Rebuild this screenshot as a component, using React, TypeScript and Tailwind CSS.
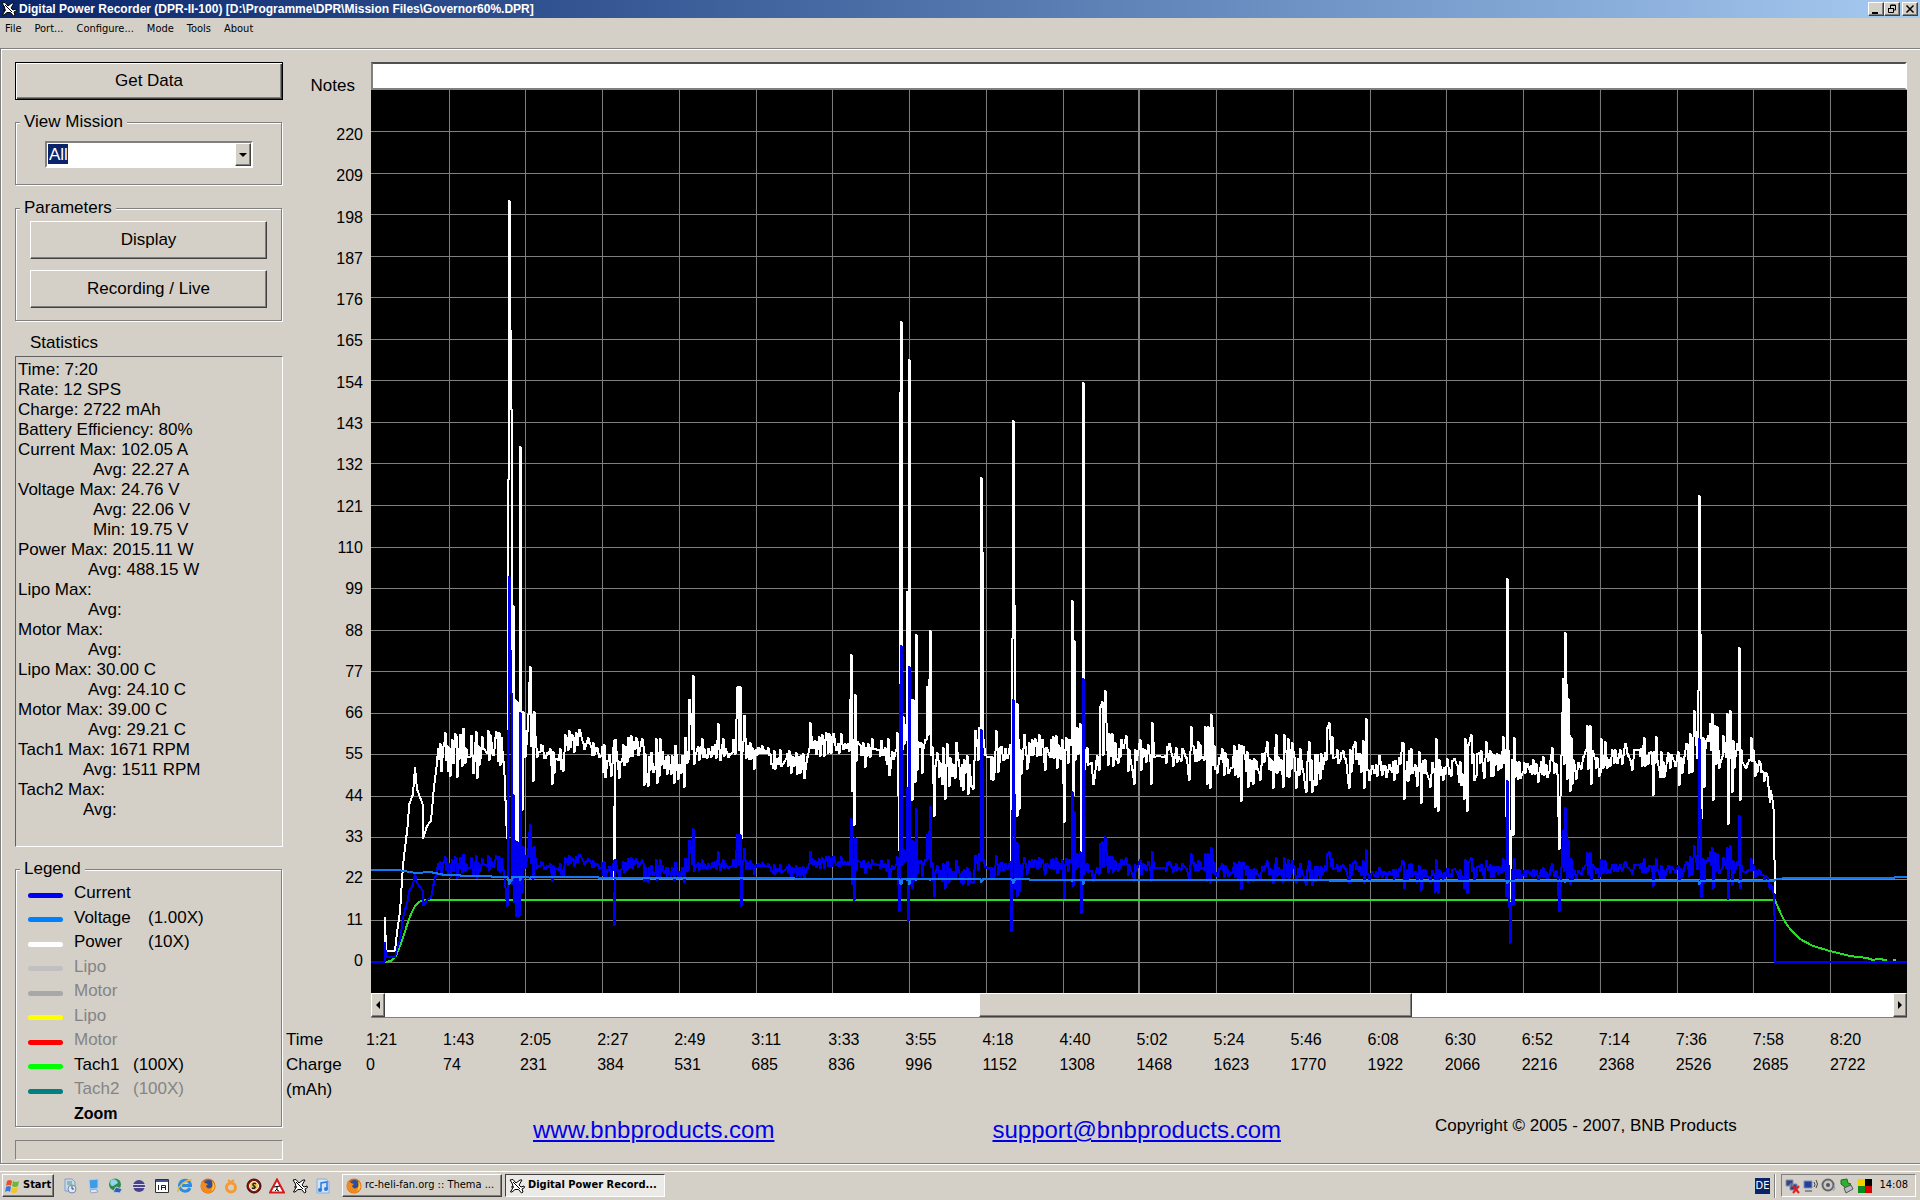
import { ReactNode, useState } from 'react';
import { clsx } from 'clsx';

type Pt = [number, number];

const UI = 'font-["Tahoma","DejaVu_Sans_Condensed","Noto_Sans",sans-serif]';
const RAISED = 'border border-t-white border-l-white border-r-[#404040] border-b-[#404040] bg-[#d4d0c8] shadow-[inset_-1px_-1px_0_#808080]';

const MENUS = ['File', 'Port...', 'Configure...', 'Mode', 'Tools', 'About'];

const STATS: { text: string; indent?: string }[] = [
  { text: 'Time: 7:20' },
  { text: 'Rate: 12 SPS' },
  { text: 'Charge: 2722 mAh' },
  { text: 'Battery Efficiency: 80%' },
  { text: 'Current Max: 102.05 A' },
  { text: 'Avg: 22.27 A', indent: 'pl-[75px]' },
  { text: 'Voltage Max: 24.76 V' },
  { text: 'Avg: 22.06 V', indent: 'pl-[75px]' },
  { text: 'Min: 19.75 V', indent: 'pl-[75px]' },
  { text: 'Power Max: 2015.11 W' },
  { text: 'Avg: 488.15 W', indent: 'pl-[70px]' },
  { text: 'Lipo Max:' },
  { text: 'Avg:', indent: 'pl-[70px]' },
  { text: 'Motor Max:' },
  { text: 'Avg:', indent: 'pl-[70px]' },
  { text: 'Lipo Max: 30.00 C' },
  { text: 'Avg: 24.10 C', indent: 'pl-[70px]' },
  { text: 'Motor Max: 39.00 C' },
  { text: 'Avg: 29.21 C', indent: 'pl-[70px]' },
  { text: 'Tach1 Max: 1671 RPM' },
  { text: 'Avg: 1511 RPM', indent: 'pl-[65px]' },
  { text: 'Tach2 Max:' },
  { text: 'Avg:', indent: 'pl-[65px]' },
];

const LEGEND = [
  { name: 'Current', color: 'bg-[#0000f0]', on: true },
  { name: 'Voltage', color: 'bg-[#0080ff]', on: true, scale: '(1.00X)', col: 'w-[74px]' },
  { name: 'Power', color: 'bg-white', on: true, scale: '(10X)', col: 'w-[74px]' },
  { name: 'Lipo', color: 'bg-[#c0c0c0]', on: false },
  { name: 'Motor', color: 'bg-[#a8a8a8]', on: false },
  { name: 'Lipo', color: 'bg-[#ffff00]', on: false },
  { name: 'Motor', color: 'bg-[#ff0000]', on: false },
  { name: 'Tach1', color: 'bg-[#00ff00]', on: true, scale: '(100X)', col: 'w-[59px]' },
  { name: 'Tach2', color: 'bg-[#008080]', on: false, scale: '(100X)', col: 'w-[59px]' },
];

const TICKS = Array.from({ length: 21 }, (_, i) => 220 - i * 11);
const TIMES = ['1:21', '1:43', '2:05', '2:27', '2:49', '3:11', '3:33', '3:55', '4:18', '4:40', '5:02', '5:24', '5:46', '6:08', '6:30', '6:52', '7:14', '7:36', '7:58', '8:20'];
const CHARGES = [0, 74, 231, 384, 531, 685, 836, 996, 1152, 1308, 1468, 1623, 1770, 1922, 2066, 2216, 2368, 2526, 2685, 2722];

// plot space: x 371..1907, zero line at y=962, 3.777 units per scale step
const ZERO = 962;
const UNIT = 3.777;

const START: Pt[] = [[385, 962], [385, 917], [386, 951], [395, 951], [397, 933], [400, 912], [403, 865], [408, 823], [409, 805], [413, 794], [415, 767], [417, 789], [423, 805], [423, 839], [427, 826], [431, 821], [434, 787], [437, 763]];

// [from x, centre, spread]
const BANDS: [number, number, number][] = [
  [438, 753, 24], [486, 748, 18], [500, 756, 20], [523, 742, 14], [535, 750, 14], [548, 762, 16], [564, 741, 12], [590, 750, 9], [602, 758, 20],
  [622, 752, 18], [644, 761, 26], [686, 751, 12], [745, 751, 8], [770, 762, 12], [800, 760, 20], [811, 746, 13], [856, 753, 15], [888, 755, 22],
  [903, 740, 24], [918, 745, 10], [935, 769, 24], [974, 750, 20], [986, 760, 18], [1000, 751, 14], [1020, 752, 21], [1064, 748, 24],
  [1085, 760, 22], [1109, 753, 18], [1145, 754, 13], [1204, 757, 22], [1213, 762, 16], [1243, 765, 23], [1325, 755, 10], [1350, 757, 15],
  [1368, 768, 14], [1400, 768, 20], [1440, 772, 13], [1464, 758, 22], [1514, 769, 20], [1573, 766, 16], [1593, 762, 14], [1601, 753, 17],
  [1646, 760, 22], [1657, 764, 14], [1682, 748, 24], [1705, 745, 24], [1715, 752, 28], [1733, 752, 20], [1742, 758, 12], [1755, 766, 10],
  [1762, 775, 9],
];

const PEAKS: Pt[] = [
  [507, 838], [508, 480], [509, 201], [510, 330], [511, 409], [512, 790], [513, 606], [514, 830], [515, 700], [516, 860], [517, 702], [518, 858], [519, 861], [520, 447], [521, 712], [522, 810], [523, 712],
  [530, 667], [532, 715], [533, 781], [534, 712], [552, 784], [614, 741], [614, 879], [615, 740], [619, 778],
  [648, 786], [674, 783], [684, 787], [688, 760], [689, 700], [691, 724], [693, 676], [694, 764], [718, 724], [737, 688], [738, 687], [739, 750], [740, 687], [741, 839], [742, 752], [744, 716],
  [754, 769], [804, 778], [810, 723], [851, 655], [852, 791], [854, 825], [855, 695],
  [899, 850], [900, 393], [901, 322], [902, 750], [903, 717], [905, 725], [906, 740], [907, 592], [908, 870], [909, 360], [910, 790], [912, 700], [912, 800], [913, 700], [915, 782], [916, 635], [917, 770],
  [922, 773], [926, 740], [927, 687], [928, 735], [930, 631], [931, 755], [934, 816], [935, 766], [945, 799], [947, 744], [956, 743], [973, 789],
  [977, 746], [979, 728], [980, 740], [981, 478], [982, 552], [983, 740], [985, 755], [993, 780], [996, 731],
  [1010, 745], [1011, 893], [1012, 639], [1013, 421], [1014, 605], [1015, 800], [1017, 704], [1017, 816], [1019, 809], [1020, 750],
  [1064, 822], [1065, 750], [1071, 745], [1072, 601], [1073, 796], [1074, 641], [1075, 760], [1077, 728], [1080, 724], [1081, 854], [1082, 740], [1083, 383], [1084, 770],
  [1093, 784], [1099, 770], [1100, 707], [1102, 702], [1105, 691], [1107, 750], [1108, 765], [1134, 784], [1151, 784], [1152, 723], [1154, 757],
  [1189, 780], [1191, 727], [1204, 760], [1205, 727], [1207, 784], [1208, 727], [1210, 788], [1211, 715], [1212, 727], [1213, 765],
  [1241, 801], [1243, 747], [1276, 735], [1284, 735], [1288, 739], [1296, 788], [1306, 792], [1312, 792], [1326, 760], [1327, 728], [1329, 723], [1332, 737],
  [1349, 788], [1364, 788], [1366, 719], [1367, 770], [1402, 743], [1403, 743], [1404, 799], [1421, 803], [1435, 807], [1436, 739], [1438, 811], [1439, 760],
  [1464, 799], [1465, 739], [1467, 811], [1468, 745], [1506, 816], [1507, 579], [1508, 750], [1510, 920], [1512, 760], [1513, 835], [1514, 738],
  [1559, 849], [1561, 756], [1563, 679], [1565, 633], [1566, 684], [1568, 699], [1569, 735], [1570, 791], [1571, 738], [1572, 784], [1586, 750], [1587, 726], [1590, 726], [1591, 784],
  [1653, 795], [1656, 737], [1679, 785], [1694, 711], [1696, 745], [1698, 691], [1699, 496], [1700, 634], [1701, 819], [1702, 750], [1704, 787],
  [1712, 714], [1713, 800], [1714, 735], [1727, 714], [1728, 824], [1730, 711], [1732, 792], [1738, 750], [1739, 648], [1740, 800], [1741, 750], [1751, 738],
  [1768, 780], [1770, 803], [1771, 790], [1773, 803], [1774, 814], [1775, 894],
];

const TACH: Pt[] = [[385, 962], [391, 961], [396, 956], [402, 941], [407, 925], [411, 914], [415, 906], [419, 902], [424, 900], [1775, 900], [1777, 905], [1782, 916], [1787, 925], [1792, 931], [1800, 939], [1813, 946], [1830, 951], [1850, 956], [1867, 958], [1873, 960], [1878, 959], [1887, 960]];
const VOLT: Pt[] = [[371, 870], [398, 870], [416, 873], [430, 872], [445, 875], [507, 877], [690, 878], [900, 879], [1160, 880], [1500, 881], [1773, 881], [1777, 879], [1787, 878], [1893, 878], [1896, 877], [1907, 877]];

function buildPower(): Pt[] {
  let seed = 20077;
  const rnd = () => { seed = (seed * 16807) % 2147483647; return seed / 2147483647; };
  const out: Pt[] = [...START];
  // every sample is held for one pixel so spikes keep a flat tip
  const hold = (x: number, y: number) => out.push([x, y], [x + 1, y]);
  let p = 0;
  let b = 0;
  let side = 1;
  for (let x = 438; x <= 1767; x++) {
    while (b < BANDS.length - 1 && BANDS[b + 1][0] <= x) b++;
    let hit = false;
    while (p < PEAKS.length && PEAKS[p][0] <= x) { hold(PEAKS[p][0], PEAKS[p][1]); p++; hit = true; }
    const r = rnd();
    const skip = rnd() < 0.3;
    if (hit || skip) continue;
    const next = PEAKS[p];
    const prev = out[out.length - 1];
    // steep flanks are given point by point, no ripple between them
    if (next && next[0] - x < 2 && Math.abs(next[1] - prev[1]) > 60) continue;
    side = rnd() < 0.75 ? -side : side;
    hold(x, Math.round(BANDS[b][1] + side * BANDS[b][2] * (0.15 + r * r * 0.9)));
  }
  PEAKS.slice(p).forEach((v) => out.push(v));
  return out;
}

const toAmps = (y: number) => {
  const power = (ZERO - y) / UNIT;
  return (22.5 - Math.sqrt(506.25 - 1.08 * power)) / 0.054;
};

const voltAt = (x: number) => {
  const i = Math.max(1, VOLT.findIndex((v) => v[0] >= x));
  const [x0, y0] = VOLT[i - 1];
  const [x1, y1] = VOLT[i];
  return y0 + ((y1 - y0) * (x - x0)) / (x1 - x0);
};

const power = buildPower();
const current: Pt[] = [[371, 962], ...power.map(([x, y]): Pt => [x, Math.round(ZERO - toAmps(y) * UNIT)]), [1775, 962], [1907, 962]];
const voltage: Pt[] = [
  ...VOLT.filter((v) => v[0] < 446),
  ...power.filter((v) => v[0] > 446).map(([x, y]): Pt => [x, Math.round(voltAt(x) + Math.max(0, toAmps(y) - 32) * 0.1)]),
  ...VOLT.filter((v) => v[0] > 1776),
];
const line = (pts: Pt[]) => pts.map((v) => v.join(',')).join(' ');

function Chart() {
  return (
    <svg role="img" aria-label="Recorded mission data" viewBox="371 90 1536 903" preserveAspectRatio="none" className="block h-0 w-full grow bg-black" shapeRendering="crispEdges" fill="none">
      <g stroke="#808080" strokeWidth="1">
        {TICKS.map((t) => <path key={t} d={`M371 ${Math.round(ZERO - t * UNIT)}.5H1907`} />)}
        {TIMES.slice(1).map((t, i) => <path key={t} strokeWidth={t === '5:02' ? 2 : 1} d={`M${Math.round(448.5 + i * 76.75)}.5 90V993`} />)}
      </g>
      <g strokeWidth="2" strokeLinejoin="bevel">
        <polyline stroke="#fff" points={line(power)} />
        <polyline stroke="#28dc28" points={line(TACH)} />
        <path stroke="#4fc8a0" d="M1893 960H1896" />
        <polyline stroke="#0000f0" points={line(current)} />
        <polyline stroke="#1478f0" points={line(voltage)} />
      </g>
    </svg>
  );
}

function Group({ title, className, children }: { title: string; className?: string; children: ReactNode }) {
  return (
    <fieldset className={clsx('mr-px border border-[#808080] shadow-[1px_1px_0_#fff,inset_1px_1px_0_#fff]', className)}>
      <legend className="ml-1 bg-[#d4d0c8] px-1 leading-5">{title}</legend>
      {children}
    </fieldset>
  );
}

function Plane() {
  return (
    <svg viewBox="0 0 16 16" className="size-4 shrink-0" stroke="#000" strokeWidth="1">
      <path fill="#fff" d="M1 2L4 1.500 7 5l4-3h2L10 7l2 2 3-1 .5 1.500L13 11l1 3-1.500 1L9.500 11.500H6L3 14H1.500L4 9.500 3.500 6z" />
      <path fill="none" d="M4 4l7 7M2 9h3" />
    </svg>
  );
}

function Firefox() {
  return (
    <svg viewBox="0 0 16 16" className="size-4 shrink-0">
      <circle cx="8" cy="8" r="7.5" fill="#d8660c" />
      <circle cx="8.5" cy="6.5" r="4.6" fill="#2c4f9c" />
      <path d="M1 4c2-1 3 0 4 1l3 1-2 2c1 3 4 3 6 1 1-2 1-4 0-6 4 3 4 7 1 10-4 4-10 2-12-3z" fill="#f08a1c" />
      <path d="M12 3c3 3 3 7 1 9l-2 1c2-3 2-7 1-10z" fill="#fbc63a" />
    </svg>
  );
}

const QUICK: { name: string; icon: ReactNode }[] = [
  { name: 'Recycle', icon: <><path d="M3 1h7l3 3v9H3z" fill="#c5d9f2" stroke="#7f9fca" /><path d="M5 4h5M5 6h5" stroke="#54a054" /><circle cx="10" cy="11" r="4" fill="#dfe9f6" stroke="#6c8cb8" /><path d="M10 8v3h2" stroke="#444" fill="none" /></> },
  { name: 'Show Desktop', icon: <><path d="M4 2l9-1v9l-8 1z" fill="#3d9bea" stroke="#a9cdf0" /><path d="M5 12l6-1 2 3-7 1z" fill="#dfe9f5" stroke="#90a8c0" /></> },
  { name: 'Network', icon: <><circle cx="7" cy="6.5" r="6" fill="#2f8b51" /><path d="M3 2c3-2 6 0 7 3l-5 3C3 8 1 6 3 2z" fill="#90d5e8" /><path d="M8 9l6 2-2 4-7-1z" fill="#395da8" stroke="#b7c9e8" /></> },
  { name: 'Eclipse', icon: <><circle cx="8" cy="8" r="6" fill="#4b4389" /><path d="M1 6.500h14M1 9.500h14" stroke="#d9d6f0" /></> },
  { name: 'Editor', icon: <><path d="M1.500 1.500h13v13h-13z" fill="#fff" stroke="#303030" /><path d="M2 3h12" stroke="#3a5a9a" strokeWidth="2" /><path d="M4.500 7v5M7.500 12V7.500h4V12M7.500 9.500h4" stroke="#222" fill="none" /></> },
  { name: 'Internet Explorer', icon: <><path d="M13 10a5.500 5.500 0 1 1 .5-2.500H5" fill="none" stroke="#2f8be0" strokeWidth="3" /><path d="M1 14C0 9 9 1 15 2" fill="none" stroke="#e8b93a" strokeWidth="1.500" /></> },
  { name: 'Firefox', icon: <Firefox /> },
  { name: 'Ring', icon: <><circle cx="8" cy="9.500" r="4.500" fill="none" stroke="#f59a33" strokeWidth="3" /><path d="M5 2l3 2 3-2" fill="none" stroke="#f59a33" strokeWidth="2" /></> },
  { name: 'Coin', icon: <><circle cx="8" cy="8" r="7" fill="#8c1414" stroke="#3a0808" /><circle cx="8" cy="8" r="4.500" fill="#e8c850" stroke="#fff" /><path d="M10 6c-3-2-4 1-2 2s1 3-2 2" fill="none" stroke="#222" strokeWidth="1.500" /></> },
  { name: 'Warning', icon: <><path d="M8 1.500L15 14.500H1z" fill="#fff" stroke="#d81818" strokeWidth="2" /><path d="M5 9l6-1M8 8v4l2 1M8 11l-2 2" stroke="#000" fill="none" /></> },
  { name: 'Recorder', icon: <Plane /> },
  { name: 'iTunes', icon: <><path d="M2 1h9l3 3v11H2z" fill="#cfe4fa" stroke="#86aedb" /><path d="M6 12V5l6-1v7" fill="none" stroke="#2c7ad8" strokeWidth="1.500" /><circle cx="5" cy="12" r="2" fill="#2c7ad8" /><circle cx="11" cy="11" r="2" fill="#2c7ad8" /></> },
];

const TRAY: ReactNode[] = [
  <><path d="M1 2h7v6H1zM5 6h7v6H5z" fill="#34457e" stroke="#8291b8" /><path d="M8 8l6 7M14 8l-6 7" stroke="#e02020" strokeWidth="2" /></>,
  <><path d="M1 3h8v7H1z" fill="#24409a" stroke="#8291b8" /><path d="M2 13h7" stroke="#8a8a8a" strokeWidth="2" /><path d="M11 4q2 3 0 5M13 2q3 4 0 8" stroke="#444" fill="none" /></>,
  <><circle cx="7" cy="7" r="5.500" fill="#c8c8c8" stroke="#666" strokeWidth="2" /><circle cx="7" cy="7" r="2" fill="#555" /><path d="M13 8q2 3-1 5" stroke="#8899cc" fill="none" /></>,
  <><path d="M2 2l6-1 1 4 3 1-5 4-5-4z" fill="#2fae2f" stroke="#187018" /><path d="M5 10l7-3 2 4-7 4z" fill="#b8bcc4" stroke="#555" /></>,
  <><path d="M1 1h7v7H1z" fill="#f0d000" /><path d="M8 1h7v7H8z" fill="#000" /><path d="M1 8h7v7H1z" fill="#0a8a1a" /><path d="M8 8h7v7H8z" fill="#d80000" /></>,
];

function TitleBar() {
  const btn = clsx(RAISED, 'flex h-[14px] w-4 items-center justify-center');
  return (
    <header className="flex h-[18px] items-center bg-linear-to-r from-[#0a246a] to-[#a6caf0] pl-px pr-[2px] text-white">
      <Plane />
      <h1 className="ml-[2px] grow font-['Liberation_Sans',sans-serif] text-[12px] leading-4 font-bold">Digital Power Recorder (DPR-II-100) [D:\Programme\DPR\Mission Files\Governor60%.DPR]</h1>
      <button aria-label="Minimize" className={btn}><svg viewBox="0 0 10 10" className="size-[10px]"><path d="M1 8h6v2H1z" /></svg></button>
      <button aria-label="Restore" className={btn}><svg viewBox="0 0 10 10" className="size-[10px]" fill="none" stroke="#000"><path d="M3.500 4V1h5v5H7M3 1.500h6M1.500 4.500h5v4h-5zM1 4.500h6" /></svg></button>
      <button aria-label="Close" className={clsx(btn, 'ml-[2px]')}><svg viewBox="0 0 10 10" className="size-[10px]" stroke="#000" strokeWidth="1.500"><path d="M1.500 1.500l7 7M8.500 1.500l-7 7" /></svg></button>
    </header>
  );
}

function Sidebar() {
  const [mission, setMission] = useState('All');
  return (
    <aside className="flex w-[268px] shrink-0 flex-col text-[17px]">
      <button className="h-[38px] border border-black bg-[#d4d0c8] shadow-[inset_1px_1px_0_#fff,inset_-1px_-1px_0_#404040,inset_-2px_-2px_0_#808080]">Get Data</button>
      <Group title="View Mission" className="mt-3 h-[73px]">
        <div className="relative mt-[9px] mr-7 ml-[29px]">
          <select aria-label="View Mission" value={mission} onChange={(e) => setMission(e.target.value)} className="block h-[27px] w-full appearance-none border-2 border-t-[#808080] border-l-[#808080] border-r-white border-b-white bg-white bg-[linear-gradient(#0a246a,#0a246a)] bg-[length:20px_20px] bg-[position:1px_1px] bg-no-repeat pl-[2px] leading-5 text-white outline-none">
            <option>All</option>
          </select>
          <span className={clsx(RAISED, 'pointer-events-none absolute top-[2px] right-[2px] flex h-[23px] w-4 items-center justify-center')}>
            <svg viewBox="0 0 8 4" className="h-1 w-2"><path d="M0 0h8L4 4z" /></svg>
          </span>
        </div>
      </Group>
      <Group title="Parameters" className="mt-[13px] h-[123px]">
        <div className="flex flex-col gap-[11px] px-[14px] pt-[3px]">
          <button className={clsx(RAISED, 'h-[38px]')}>Display</button>
          <button className={clsx(RAISED, 'h-[38px]')}>Recording / Live</button>
        </div>
      </Group>
      <h2 className="mt-3 pl-[15px] leading-5">Statistics</h2>
      <div className="mt-[3px] grow border border-t-[#606060] border-l-[#606060] border-r-white border-b-white pt-[3px] pl-[2px]">
        {STATS.map((s, i) => <p key={i} className={clsx('leading-5', s.indent)}>{s.text}</p>)}
      </div>
      <Group title="Legend" className="mt-3 h-[268px]">
        <ul className="flex h-[245px] flex-col justify-between pt-1 pl-3">
          {LEGEND.map((l, i) => (
            <li key={i} className={clsx('flex items-center leading-5', !l.on && 'text-[#848484]')}>
              <span className={clsx('mt-1 mr-[11px] h-[5px] w-[35px] rounded-full', l.color)} />
              <span className={l.col}>{l.name}</span>
              {l.scale && <span>{l.scale}</span>}
            </li>
          ))}
          <li className="pl-[46px] text-[16px] leading-5 font-bold">Zoom</li>
        </ul>
      </Group>
      <div className="mt-[13px] h-5 border border-t-[#808080] border-l-[#808080] border-r-white border-b-white" />
    </aside>
  );
}

function ScrollBar() {
  const arrow = clsx(RAISED, 'flex w-[14px] shrink-0 items-center justify-center');
  return (
    <div className="flex h-[25px] border-b border-[#808080] bg-white">
      <button aria-label="Scroll left" className={arrow}><svg viewBox="0 0 4 8" className="h-2 w-1"><path d="M4 0v8L0 4z" /></svg></button>
      <div className="flex grow">
        <div className={clsx(RAISED, 'ml-[39.4%] w-[28.7%]')} />
      </div>
      <button aria-label="Scroll right" className={arrow}><svg viewBox="0 0 4 8" className="h-2 w-1"><path d="M0 0v8l4-4z" /></svg></button>
    </div>
  );
}

function PlotArea() {
  const link = 'text-2xl leading-7 text-[#0000e8] underline decoration-2 underline-offset-2';
  return (
    <section className="flex min-w-0 grow flex-col">
      <div className="flex grow">
        <div className="flex w-[88px] shrink-0 flex-col pt-[14px] pr-2 pb-[47px] text-right">
          <label htmlFor="notes" className="pr-2 text-[17px] leading-5">Notes</label>
          <ol className="mt-[29px] flex grow flex-col justify-between">
            {TICKS.map((t) => <li key={t} className="leading-5">{t}</li>)}
          </ol>
        </div>
        <div className="flex min-w-0 grow flex-col">
          <input id="notes" className="h-7 w-full border-2 border-[#808080] border-t-[#505050] border-r-white bg-white px-1 outline-none" />
          <Chart />
          <ScrollBar />
        </div>
      </div>
      <table className="mt-[9px] w-full table-fixed text-left">
        <tbody>
          <tr className="h-[25px]"><th className="w-[83px] pl-[3px] text-[17px] leading-6 font-normal">Time</th>{TIMES.map((t) => <td key={t}>{t}</td>)}</tr>
          <tr className="h-[25px]"><th className="pl-[3px] text-[17px] leading-6 font-normal">Charge</th>{CHARGES.map((c) => <td key={c}>{c}</td>)}</tr>
          <tr className="h-[25px]"><th className="pl-[3px] text-[17px] leading-6 font-normal">(mAh)</th></tr>
        </tbody>
      </table>
      <div className="flex h-[61px] items-start pt-[14px] pl-[250px]">
        <a href="http://www.bnbproducts.com" className={link}>www.bnbproducts.com</a>
        <a href="mailto:support@bnbproducts.com" className={clsx(link, 'ml-[218px]')}>support@bnbproducts.com</a>
        <p className="ml-[154px] text-[17px] leading-5">Copyright © 2005 - 2007, BNB Products</p>
      </div>
    </section>
  );
}

function TaskBar() {
  return (
    <footer className={clsx(UI, 'flex h-[29px] items-center border-t border-white pr-1 pb-px pl-[2px] text-[11px]')}>
      <button className={clsx(RAISED, 'flex h-[23px] w-[52px] items-center gap-[2px] pl-[2px] font-bold')}>
        <svg viewBox="0 0 16 16" className="size-4 shrink-0"><path d="M2 3q3-2 5 0L6 8Q4 6 1 8z" fill="#e8502c" /><path d="M8 3q3 2 6 0l-1 5q-3 2-6 0z" fill="#6cb833" /><path d="M1 9q3-2 5 0l-1 5q-2-2-5 0z" fill="#3a78dc" /><path d="M7 9q3 2 6 0l-1 5q-3 2-6 0z" fill="#f4c424" /></svg>
        Start
      </button>
      <nav className="ml-2 flex gap-[7px]">
        {QUICK.map((q) => <button key={q.name} aria-label={q.name}><svg viewBox="0 0 16 16" className="size-4">{q.icon}</svg></button>)}
      </nav>
      <button className={clsx(RAISED, 'ml-[11px] flex h-[23px] w-[160px] items-center gap-[3px] pl-[3px] whitespace-nowrap')}><Firefox />rc-heli-fan.org :: Thema ...</button>
      <button className="ml-[3px] flex h-[23px] w-[160px] items-center gap-[3px] border border-t-[#404040] border-l-[#404040] border-r-white border-b-white bg-[#eceae6] pl-[3px] font-bold whitespace-nowrap"><Plane />Digital Power Record...</button>
      <span className="ml-auto bg-[#0a246a] px-px leading-4 text-white">DE</span>
      <span className="mr-[5px] ml-1 h-6 w-[2px] border-l border-[#808080] bg-white" />
      <div className="flex h-[23px] items-center gap-[2px] border border-t-[#808080] border-l-[#808080] border-r-white border-b-white pr-[7px] pl-[3px]">
        {TRAY.map((t, i) => <svg key={i} viewBox="0 0 16 16" className="size-4">{t}</svg>)}
        <time className="ml-1">14:08</time>
      </div>
    </footer>
  );
}

export default function App() {
  return (
    <div className="flex min-h-screen flex-col bg-[#d4d0c8] font-['Liberation_Sans',Arial,sans-serif] text-[16px] text-black">
      <div className={UI}>
        <TitleBar />
        <nav className="flex h-[30px] gap-[13px] pt-[3px] pl-[5px] text-[11px] leading-4">
          {MENUS.map((m) => <button key={m} className="self-start">{m}</button>)}
        </nav>
      </div>
      <main className="flex grow border-t border-l border-[#808080] shadow-[inset_1px_1px_0_#fff]">
        <div className="flex min-w-0 grow border-b border-[#808080] pt-[13px] pr-[13px] pl-[14px]">
          <div className="flex pb-[3px]"><Sidebar /></div>
          <PlotArea />
        </div>
      </main>
      <div className="h-[7px] border-t border-white" />
      <TaskBar />
    </div>
  );
}
